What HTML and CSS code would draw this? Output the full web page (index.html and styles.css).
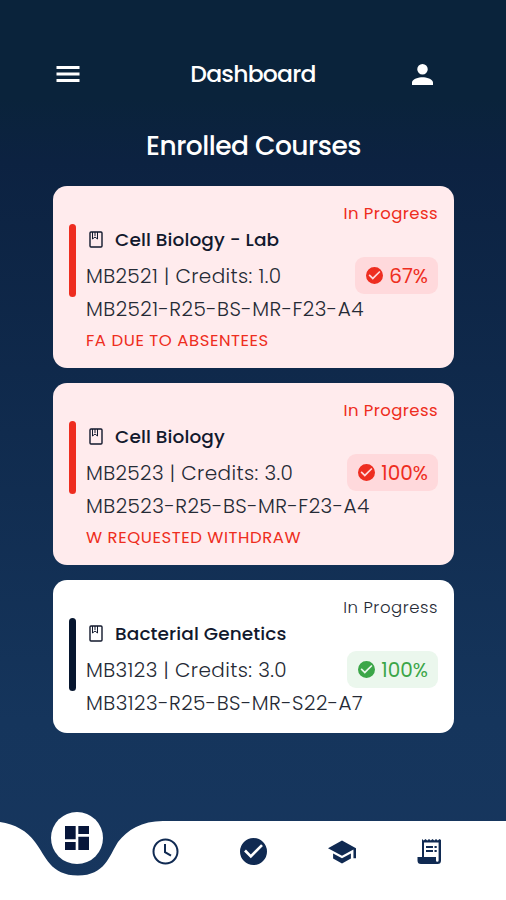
FILE: index.html
```html
<!DOCTYPE html>
<html lang="en">
  <head>
    <meta charset="UTF-8" />
    <meta name="viewport" content="width=device-width, initial-scale=1.0" />
    <title>Dashboard</title>
    <link rel="stylesheet" href="styles.css">
  </head>
  <body>
    <svg class="defs" width="0" height="0">
      <symbol id="book" viewBox="0 0 14 17">
        <rect x="1" y="1" width="12" height="15" rx="1" fill="none" stroke="currentColor" stroke-width="1.4" />
        <path d="M3.500 1v7L6 6l2.500 2V1M6 1v4" fill="none" stroke="currentColor" stroke-width="1" />
      </symbol>
      <symbol id="check" viewBox="2 2 20 20">
        <path fill="currentColor" d="M12 2a10 10 0 1 0 0 20 10 10 0 0 0 0-20zm-2 15-5-5 1.4-1.4 3.6 3.6 7.6-7.6L19 8z" />
      </symbol>
    </svg>

    <header class="topbar">
      <button class="icon-btn" aria-label="Menu">
        <svg width="24" height="18" viewBox="0 0 24 18"><path fill="#fff" d="M.5 1h23v3H.5zM.5 7.5h23v3H.5zM.5 14h23v3H.5z" /></svg>
      </button>
      <h1>Dashboard</h1>
      <button class="icon-btn" aria-label="Profile">
        <svg width="21" height="21" viewBox="4 4 16 16"><path fill="#fff" d="M12 12a4 4 0 1 0 0-8 4 4 0 0 0 0 8zm0 2c-2.700 0-8 1.300-8 4v2h16v-2c0-2.700-5.300-4-8-4z" /></svg>
      </button>
    </header>

    <main>
      <h2>Enrolled Courses</h2>

      <section class="card alert">
        <p class="status">In Progress</p>
        <div class="body">
          <span class="bar"></span>
          <div class="info">
            <h3><svg class="book"><use href="#book" /></svg><span>Cell Biology - Lab</span></h3>
            <div class="row">
              <p class="code">MB2521 | Credits: 1.0</p>
              <span class="badge"><svg><use href="#check" /></svg><b>67%</b></span>
            </div>
            <p class="section">MB2521-R25-BS-MR-F23-A4</p>
            <p class="note">FA DUE TO ABSENTEES</p>
          </div>
        </div>
      </section>

      <section class="card alert">
        <p class="status">In Progress</p>
        <div class="body">
          <span class="bar"></span>
          <div class="info">
            <h3><svg class="book"><use href="#book" /></svg><span>Cell Biology</span></h3>
            <div class="row">
              <p class="code">MB2523 | Credits: 3.0</p>
              <span class="badge"><svg><use href="#check" /></svg><b>100%</b></span>
            </div>
            <p class="section">MB2523-R25-BS-MR-F23-A4</p>
            <p class="note">W REQUESTED WITHDRAW</p>
          </div>
        </div>
      </section>

      <section class="card">
        <p class="status">In Progress</p>
        <div class="body">
          <span class="bar"></span>
          <div class="info">
            <h3><svg class="book"><use href="#book" /></svg><span>Bacterial Genetics</span></h3>
            <div class="row">
              <p class="code">MB3123 | Credits: 3.0</p>
              <span class="badge"><svg><use href="#check" /></svg><b>100%</b></span>
            </div>
            <p class="section">MB3123-R25-BS-MR-S22-A7</p>
          </div>
        </div>
      </section>
    </main>

    <nav class="tabs">
      <svg class="wave" viewBox="0 0 506 80"><path fill="#fff" d="M0 2C15 4 27 11 35 22C46 36 50 55.500 78 55.500C105 55.500 109 36 118 22C127 10 142 1 163 1H506V80H0z" /></svg>
      <a class="tab active" href="#" aria-label="Dashboard">
        <svg width="24" height="24" viewBox="3 3 18 18"><path fill="currentColor" d="M3 13h8V3H3zm0 8h8v-6H3zm10 0h8V11h-8zm0-18v6h8V3z" /></svg>
      </a>
      <a class="tab" href="#" aria-label="Schedule">
        <svg width="27" height="27" viewBox="0 0 27 27" fill="none" stroke="currentColor" stroke-width="2"><circle cx="13.500" cy="13.500" r="12" /><path d="M13 6v8.200l6 3.500" /></svg>
      </a>
      <a class="tab" href="#" aria-label="Attendance">
        <svg width="27" height="27"><use href="#check" /></svg>
      </a>
      <a class="tab" href="#" aria-label="Courses">
        <svg width="28" height="24" viewBox="1 3 22 18"><path fill="currentColor" d="M5 13.200v4L12 21l7-3.800v-4L12 17zM12 3 1 9l11 6 9-4.900V17h2V9z" /></svg>
      </a>
      <a class="tab" href="#" aria-label="Fees">
        <svg width="26" height="27" viewBox="0 0 26 27">
          <path fill="currentColor" fill-rule="evenodd" d="M5 1l1.700 1.500L8.500 1l1.800 1.500L12 1l1.800 1.500L15.500 1l1.800 1.500L19 1l1.800 1.500L22.500 1l1.500 1v20.500a3.500 3.500 0 0 1-3.500 3.500H4a3.500 3.500 0 0 1-3.500-3.500V19H5zM7 4.500V19h12v3.500a1.300 1.300 0 0 0 2.600 0v-18z" />
          <path fill="currentColor" d="M9 8h7v2H9zM17.500 8h2.200v2h-2.200zM9 12h7v2H9zM17.500 12h2.200v2h-2.200z" />
        </svg>
      </a>
    </nav>
  </body>
</html>
```
FILE: styles.css
```css
* {
  margin: 0;
  padding: 0;
  box-sizing: border-box;
  font-family: "Poppins", Inter, "Open Sans", sans-serif;
}
body {
  height: 900px;
  display: flex;
  flex-direction: column;
  overflow: hidden;
  background: linear-gradient(#0a233b 0%, #0a233b 11%, #0c2241 18%, #102b4e 48%, #15355c 80%, #17365e 100%);
}
.defs {
  position: absolute;
}
.topbar {
  height: 74px;
  margin-top: 37px;
  padding: 0 72px 0 56px;
  display: flex;
  align-items: center;
  justify-content: space-between;
}
.icon-btn {
  width: 24px;
  height: 24px;
  border: none;
  background: none;
  display: flex;
  align-items: center;
  justify-content: center;
}
.topbar h1 {
  margin-left: 16px;
  padding-bottom: 2px;
  color: #fff;
  font-size: 23.5px;
  font-weight: 500;
  letter-spacing: -0.75px;
  white-space: nowrap;
}
main {
  flex: 1;
  padding: 0 52px 0 53px;
  display: flex;
  flex-direction: column;
  gap: 15px;
}
h2 {
  height: 60px;
  line-height: 70px;
  text-align: center;
  color: #fff;
  font-size: 26.5px;
  font-weight: 500;
  letter-spacing: -0.5px;
}
.card {
  --accent: #3ba648;
  --soft: #ebf7ed;
  padding: 18px 16px 14px;
  background: #fff;
  border-radius: 14px;
  color: #252a35;
}
.card.alert {
  --accent: #ee2d20;
  --soft: #ffd9dc;
  background: #ffebed;
}
.status {
  line-height: 20px;
  text-align: right;
  font-size: 16.5px;
  font-weight: 300;
  letter-spacing: 0.55px;
}
.alert .status,
.note {
  color: var(--accent);
  font-weight: 400;
}
.alert .status {
  letter-spacing: 0.4px;
}
.body {
  display: flex;
  gap: 10px;
}
.bar {
  width: 7px;
  height: 73px;
  border-radius: 4px;
  background: #07162f;
}
.alert .bar {
  background: var(--accent);
}
.info {
  flex: 1;
  white-space: nowrap;
}
h3 {
  height: 32px;
  display: flex;
  align-items: center;
  gap: 12px;
  padding: 0 0 2px 3px;
  color: #12192d;
  font-size: 18.5px;
  font-weight: 500;
  letter-spacing: 0.1px;
}
.book {
  width: 14px;
  height: 17px;
}
.row {
  height: 39px;
  display: flex;
  align-items: center;
  justify-content: space-between;
}
.code,
.section {
  font-size: 20px;
  font-weight: 300;
  letter-spacing: 0.45px;
}
.code {
  letter-spacing: 0.38px;
}
.section {
  line-height: 28px;
  margin-bottom: 2px;
}
.badge {
  height: 37px;
  padding: 0 10px 0 11px;
  display: flex;
  align-items: center;
  gap: 6px;
  border-radius: 9px;
  background: var(--soft);
  color: var(--accent);
}
.badge svg {
  width: 17px;
  height: 17px;
}
.badge b {
  font-size: 20px;
  font-weight: 400;
}
.note {
  margin-top: 3px;
  line-height: 29px;
  margin-bottom: -1px;
  font-size: 16.5px;
  letter-spacing: 0.55px;
}
.tabs {
  position: relative;
  height: 80px;
  padding-left: 33px;
  display: flex;
  color: #102a52;
}
.wave {
  position: absolute;
  left: 0;
  top: 0;
  width: 506px;
  height: 80px;
}
.tab {
  position: relative;
  width: 88px;
  height: 63px;
  display: flex;
  align-items: center;
  justify-content: center;
  color: inherit;
}
.tab.active {
  width: 52px;
  height: 52px;
  margin: -8px 18.5px 0 18px;
  border-radius: 50%;
  background: #fff;
  color: #07163a;
}
```
